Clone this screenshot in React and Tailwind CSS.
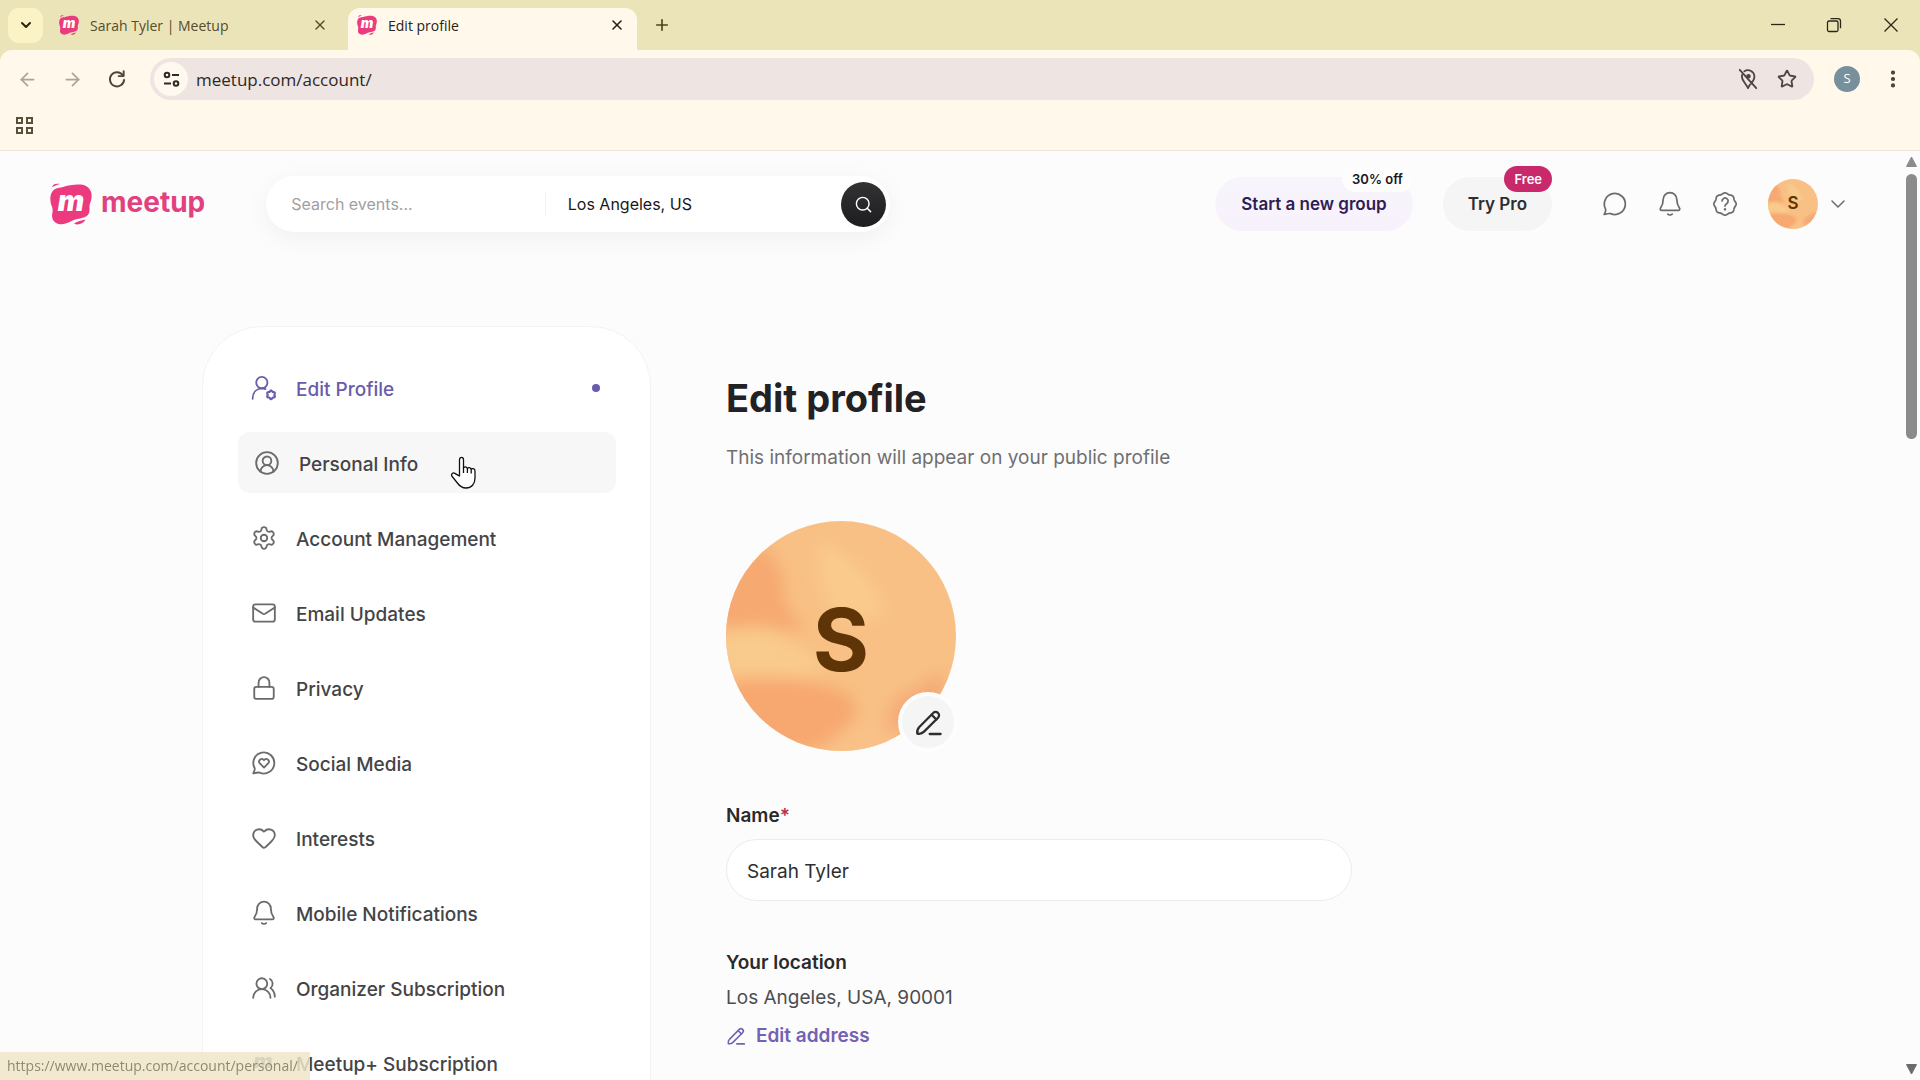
import React from "react";
import {
  Settings,
  Mail,
  Lock,
  Heart,
  UsersRound,
  CircleUserRound,
  Search,
  ChevronDown,
  Star,
  ArrowLeft,
  ArrowRight,
  X,
  Plus,
  EllipsisVertical,
} from "lucide-react";

function Svg({ size = 26, sw = 1.7, children, className = "" }) {
  return (
    <svg
      width={size}
      height={size}
      viewBox="0 0 24 24"
      fill="none"
      stroke="currentColor"
      strokeWidth={sw}
      strokeLinecap="round"
      strokeLinejoin="round"
      className={"shrink-0 " + className}
      aria-hidden="true"
    >
      {children}
    </svg>
  );
}

const scallop = (cx, cy, radius, depth, lobes) =>
  Array.from({ length: 97 }, (_, i) => {
    const t = (i / 96) * Math.PI * 2;
    const r = radius + depth * Math.cos(lobes * t);
    return (i ? "L" : "M") + (cx + r * Math.sin(t)).toFixed(2) + " " + (cy - r * Math.cos(t)).toFixed(2);
  }).join("") + "Z";

const Bell = (p) => (
  <Svg {...p}>
    <path d="M12 1.500a6.300 6.300 0 0 0-6.300 6.300c0 3.200-.7 5.400-2.300 7.600-.9 1.300-.3 2.500 1.100 2.500h15c1.400 0 2-1.200 1.100-2.500-1.600-2.200-2.300-4.400-2.300-7.600A6.300 6.300 0 0 0 12 1.500z" />
    <path d="M10 21.300c1 .9 3 .9 4 0" />
  </Svg>
);

const Chat = ({ children, ...p }) => (
  <Svg {...p}>
    <path d="M3.300 16.600A9.700 9.700 0 1 1 8 20.900c-1.700-.5-3.700.2-6 .7.900-1.800 2-3.400 1.300-5z" />
    {children}
  </Svg>
);

const ChatHeart = (p) => (
  <Chat {...p}>
    <path d="M12 16.200l-3.800-3.800a2.400 2.400 0 0 1 3.500-3.300l.3.300.3-.3a2.400 2.400 0 0 1 3.500 3.300z" />
  </Chat>
);

const UserGear = (p) => (
  <Svg {...p}>
    <circle cx="10" cy="7" r="5.200" />
    <path d="M1.500 22c0-5.600 3.400-9.300 8.500-9.600 1.200 0 2.300.2 3.300.6" />
    <path d={scallop(18.500, 18.300, 3.500, 0.450, 6)} strokeWidth="2" />
  </Svg>
);

const Pencil = (p) => (
  <Svg {...p}>
    <path d="M2.800 21.200c-.5-2 .2-4 1.600-5.500L15.900 4.100a2.800 2.800 0 0 1 4 4L8.300 19.600c-1.500 1.500-3.500 2-5.500 1.600z" />
    <path d="M14.700 5.700l3.800 3.800M13 21.500h9" />
  </Svg>
);

const Help = (p) => (
  <Svg {...p}>
    <path d={scallop(12, 12, 9.800, 0.500, 8)} />
    <path d="M9.300 9.200a2.800 2.800 0 1 1 4.200 2.500c-.9.600-1.500 1-1.500 2.100" />
    <path d="M12 16.900v.1" strokeWidth="2.200" />
  </Svg>
);

function MeetupMark({ className }) {
  return (
    <svg viewBox="0 0 42 42" className={className} aria-hidden="true">
      <path
        d="M13 4C19 2 31 0 36 3c5 3 6 7 5.500 12-.4 4-2.500 6-2 10 .4 5-1 8-6 9.500-5 1.500-8 1.500-12 3.500-5 3-11 4.500-15.500 2C2 37.500 1.500 34 2.500 29c.6-3.500-.5-5-1.500-8C-.6 15 .5 8.500 5 6c3-1.600 5-1 8-2z"
        fill="#ec3a7e"
      />
      <path d="M2 4c1-3 4-4 8-3-2.500.5-5 2-8 3zM24 40.500c4-2.500 7-3 11.500-4C34 40 28 43 24 40.500z" fill="#ec3a7e" />
      <text
        x="21"
        y="28"
        textAnchor="middle"
        fill="#fff"
        className="font-['Inter'] text-[28px] font-black italic"
      >
        m
      </text>
    </svg>
  );
}

function AvatarArt() {
  return (
    <svg viewBox="0 0 230 230" className="absolute inset-0 size-full" preserveAspectRatio="none" aria-hidden="true">
      <defs>
        <filter id="soft" x="-30%" y="-30%" width="160%" height="160%">
          <feGaussianBlur stdDeviation="8" />
        </filter>
      </defs>
      <rect width="230" height="230" fill="#f8c084" />
      <g filter="url(#soft)">
        <path d="M-10 40L40 25 55 50 60 85 80 112 30 104-10 110z" fill="#f6a971" />
        <path d="M95 20c40 20 60 50 64 75l-40 5C90 75 92 45 95 20z" fill="#faca8d" />
        <path d="M-10 112c50-10 70 0 110 35l-20 8c-40 2-60-4-90-8z" fill="#f9cb8c" />
        <path d="M-10 165c50-12 90-8 125 5 25 14 20 34-30 60H10z" fill="#f7a76f" />
        <path d="M168 180l50-30v60h-60z" fill="#f5a977" />
        <path d="M110 215l50-20v40h-60z" fill="#f9c188" />
      </g>
    </svg>
  );
}

const NAV = [
  { label: "Edit Profile", Icon: UserGear, active: true },
  { label: "Personal Info", Icon: CircleUserRound, hover: true },
  { label: "Account Management", Icon: Settings },
  { label: "Email Updates", Icon: Mail },
  { label: "Privacy", Icon: Lock },
  { label: "Social Media", Icon: ChatHeart },
  { label: "Interests", Icon: Heart },
  { label: "Mobile Notifications", Icon: Bell },
  { label: "Organizer Subscription", Icon: UsersRound },
];

function HandCursor() {
  return (
    <svg width="27" height="34" viewBox="0 0 27 34" className="pointer-events-none absolute top-6 left-[212px]" aria-hidden="true">
      <path
        d="M9.500 20V4c0-3.500 4-3.500 4 0v8c.5-1.800 3.700-1.500 3.900.7.600-1.700 3.600-1.400 3.800.8.700-1.400 3.800-1.200 3.800 1.500V22c0 6-3.500 10-9 10-4 0-6.500-2-9-5.500L1.800 20c-1-2 1.200-3.900 3.200-2.600 1.700 1 3 2 4.500 2.600z"
        fill="#fff"
        stroke="#111"
        strokeWidth="1.300"
        strokeLinejoin="round"
      />
      <path d="M13.500 11v6M17.400 12.500V17M21.200 13.500V17.500" stroke="#111" strokeWidth="1.300" />
    </svg>
  );
}

function NavItem({ label, Icon, active, hover }) {
  const tone = active ? "text-[#6a5bab]" : "text-[#444446]";
  return (
    <li>
      <a
        href="#"
        className={
          "relative flex h-[61px] items-center rounded-xl text-[19px] " +
          (hover ? "bg-[#f7f7f7] pl-4 " : "pl-[13px] ") +
          tone
        }
      >
        <span className={active ? "text-[#6a5bab]" : "text-[#6b6b6d]"}>
          <Icon size={26} strokeWidth={1.700} />
        </span>
        <span className="ml-[19px] pt-1 leading-7 font-medium">{label}</span>
        {active && <span className="mr-4 ml-auto size-2 rounded-full bg-[#6a5bab]" />}
        {hover && <HandCursor />}
      </a>
    </li>
  );
}

function BrowserChrome() {
  return (
    <div className="shrink-0 bg-[#ece4b9] font-['Open_Sans',sans-serif]">
      <div className="flex h-[50px] items-center pl-2">
        <button aria-label="Search tabs" className="flex size-[35px] items-center justify-center rounded-[11px] bg-[#fbf3c5] text-[#2a2410]">
          <ChevronDown size={16} strokeWidth={3} />
        </button>
        <div className="ml-4 flex h-[42px] w-[289px] items-center text-[14px] text-[#544c2c]">
          <MeetupMark className="size-5" />
          <span className="ml-[11px] flex-1">Sarah Tyler | Meetup</span>
          <button aria-label="Close tab" className="mr-5">
            <X size={16} strokeWidth={2} />
          </button>
        </div>
        <div className="flex h-[42px] w-[289px] items-center self-end rounded-t-xl bg-[#fff8eb] pb-2 pl-[9px] text-[14px] text-[#26221a]">
          <MeetupMark className="size-5" />
          <span className="ml-[11px] flex-1">Edit profile</span>
          <button aria-label="Close tab" className="mr-3">
            <X size={16} strokeWidth={2.400} />
          </button>
        </div>
        <button aria-label="New tab" className="ml-4 text-[#4a431f]">
          <Plus size={18} strokeWidth={2.200} />
        </button>
        <div className="mr-5 ml-auto flex items-center gap-10 text-[#2a2717]">
          <button aria-label="Minimize">
            <svg width="16" height="16" viewBox="0 0 16 16" stroke="currentColor" strokeWidth="1.300"><path d="M1 7.500h14" /></svg>
          </button>
          <button aria-label="Restore">
            <svg width="16" height="16" viewBox="0 0 16 16" fill="none" stroke="currentColor" strokeWidth="1.300">
              <rect x="1.500" y="4" width="10.500" height="10.500" rx="1.500" />
              <path d="M4.500 1.700h7.500a2.500 2.500 0 0 1 2.500 2.500v7" />
            </svg>
          </button>
          <button aria-label="Close window">
            <svg width="18" height="16" viewBox="0 0 18 16" stroke="currentColor" strokeWidth="1.300"><path d="M2.500 1.500l13 13M15.500 1.500l-13 13" /></svg>
          </button>
        </div>
      </div>
      <div className="rounded-t-xl border-b border-[#efe4d8] bg-[#fff8eb]">
        <div className="flex h-[58px] items-center pr-4 pl-[17px]">
          <button aria-label="Back" className="text-[#a9a59a]"><ArrowLeft size={21} strokeWidth={2} /></button>
          <button aria-label="Forward" className="ml-6 text-[#a9a59a]"><ArrowRight size={21} strokeWidth={2} /></button>
          <button aria-label="Reload" className="ml-6 text-[#4c483c]">
            <Svg size={20} sw={2.300}>
              <path d="M19 7.500A8.500 8.500 0 1 0 20.500 13" />
              <path d="M20 2.500V8.500H14" />
            </Svg>
          </button>
          <div className="ml-[23px] flex h-[42px] flex-1 items-center rounded-full bg-[#eee5e2] pr-[17px] pl-[4px]">
            <button aria-label="View site information" className="flex size-[34px] items-center justify-center rounded-full bg-[#fff8ee] text-[#2d2b27]">
              <svg width="17" height="17" viewBox="0 0 17 17" fill="none" stroke="currentColor" strokeWidth="2">
                <circle cx="4" cy="4" r="2.300" /><path d="M9 4h7M1 12.500h7" /><circle cx="13" cy="12.500" r="2.300" />
              </svg>
            </button>
            <input
              aria-label="Address and search bar"
              defaultValue="meetup.com/account/"
              className="ml-2 w-0 flex-1 bg-transparent pt-[2px] text-[17px] text-[#2c2827] outline-none"
            />
            <button aria-label="Location blocked" className="mr-[18px] text-[#4b4545]">
              <Svg size={22} sw={2}>
                <path d="M8 3.500c5-3 11 .5 11 6 0 3-2 5.500-4 8M5.500 7.500C4 13 10 17 12 22c.6-1.500 1.300-2.700 2-3.800M3 2l18 20" />
                <circle cx="12.500" cy="9" r="1.500" fill="currentColor" />
              </Svg>
            </button>
            <button aria-label="Bookmark this tab" className="text-[#4b4545]"><Star size={20} strokeWidth={2.200} /></button>
          </div>
          <button aria-label="Profile" className="ml-5 flex size-[26px] items-center justify-center rounded-full bg-[#78909c] text-[13px] text-white">S</button>
          <button aria-label="Menu" className="ml-[22px] text-[#45412f]"><EllipsisVertical size={22} strokeWidth={2.600} /></button>
        </div>
        <div className="flex h-[42px] pt-[8px] pl-[15px] text-[#57513c]">
          <button aria-label="Apps" className="self-start">
            <svg width="19" height="19" viewBox="0 0 19 19" fill="none" stroke="currentColor" strokeWidth="2">
              <path d="M2 2h5v5H2zM12 2h5v5h-5zM2 12h5v5H2zM12 12h5v5h-5z" />
            </svg>
          </button>
        </div>
      </div>
    </div>
  );
}

function SiteHeader() {
  return (
    <header className="flex h-[106px] shrink-0 items-center pr-[52px] pl-[50px]">
      <a href="#" className="flex shrink-0 items-center" aria-label="Meetup home">
        <MeetupMark className="h-[42px] w-[42px]" />
        <span className="ml-[9px] pb-1 text-[28px] leading-none font-bold text-[#e2417f]">meetup</span>
      </a>
      <form className="ml-[61px] flex h-14 max-w-[624px] flex-1 items-center rounded-full bg-white pr-1 pl-[25px] text-[16px] shadow-[0_6px_24px_rgba(0,0,0,0.05)]">
        <input aria-label="Search events" placeholder="Search events..." className="w-0 flex-1 outline-none placeholder:text-[#a0a0a4]" />
        <span className="h-6 w-px bg-[#f1f1f3]" />
        <input aria-label="Location" defaultValue="Los Angeles, US" className="ml-[22px] w-0 flex-1 text-[#18181b] outline-none" />
        <button type="button" aria-label="Search" className="ml-5 flex size-[45px] items-center justify-center rounded-full bg-linear-to-b from-[#333335] to-[#1d1d1f] text-white">
          <Search size={19} strokeWidth={1.800} />
        </button>
      </form>
      <div className="ml-auto flex shrink-0 items-center">
        <button className="relative h-[54px] rounded-full bg-linear-to-b from-[#f7f5fb] to-[#f8f1fc] px-[26px] pt-[2px] text-[17px] font-semibold text-[#2f1d52]">
          Start a new group
          <span className="absolute -top-[11px] right-0 rounded-full bg-[#fdfdfd] px-[10px] py-1 text-[13px] leading-[18px] font-semibold text-[#18181b]">30% off</span>
        </button>
        <button className="relative ml-[30px] h-[54px] rounded-full bg-[#f5f5f5] px-[25px] pt-[2px] text-[17px] font-semibold text-[#2e2e30]">
          Try Pro
          <span className="absolute -top-[11px] right-0 rounded-full bg-[#c7296a] px-[10px] py-1 text-[13px] leading-[18px] font-semibold text-white">Free</span>
        </button>
        <div className="ml-[50px] flex items-center gap-[29px] text-[#6b6b6d]">
          <button aria-label="Messages"><Chat size={26} sw={1.600} /></button>
          <button aria-label="Notifications"><Bell size={26} sw={1.600} /></button>
          <button aria-label="Help"><Help size={26} sw={1.600} /></button>
        </div>
        <button aria-label="Account menu" className="ml-[30px] flex items-center gap-2">
          <span className="relative flex size-[50px] items-center justify-center overflow-hidden rounded-full">
            <AvatarArt />
            <span className="relative text-[17px] font-semibold text-[#5f3508]">S</span>
          </span>
          <ChevronDown size={24} strokeWidth={1.500} className="text-[#6b6b6d]" />
        </button>
      </div>
    </header>
  );
}

function Sidebar() {
  return (
    <nav className="w-[449px] shrink-0 overflow-hidden rounded-t-[60px] border border-[#f3f3f3] bg-white pt-[30px] pr-[34px] pl-[35px]">
      <ul className="flex flex-col gap-[14px]">
        {NAV.map((n) => (
          <NavItem key={n.label} {...n} />
        ))}
        <li>
          <a href="#" className="flex h-[61px] items-center pl-[13px] text-[19px] text-[#444446]">
            <svg width="26" height="26" viewBox="0 0 26 26" className="shrink-0" aria-hidden="true">
              <text x="12" y="18" textAnchor="middle" fill="#6b6b6d" className="text-[20px] font-black italic">m</text>
            </svg>
            <span className="ml-[19px] pt-1 leading-7 font-medium">Meetup+ Subscription</span>
          </a>
        </li>
      </ul>
    </nav>
  );
}

function ProfileForm() {
  return (
    <main className="max-w-[626px] flex-1 pt-[47px]">
      <h1 className="text-[38px] leading-[50px] font-bold text-[#222224]">Edit profile</h1>
      <p className="mt-5 text-[19px] leading-[30px] text-[#6f6f71]">This information will appear on your public profile</p>
      <div className="relative mt-[48px] size-[230px]">
        <div className="relative flex size-full items-center justify-center overflow-hidden rounded-full">
          <AvatarArt />
          <span className="relative pt-2 text-[86px] leading-none font-bold text-[#5f3508]">S</span>
        </div>
        <button aria-label="Edit photo" className="absolute -right-[2px] -bottom-[1px] flex size-[60px] items-center justify-center rounded-full border-4 border-[#fdfdfd] bg-[#f5f5f5] text-[#2e2e30]">
          <Pencil size={29} sw={1.900} />
        </button>
      </div>
      <label htmlFor="name" className="mt-[52px] block text-[19px] leading-[26px] font-semibold text-[#2a2a2c]">
        Name<span className="text-[#b8324f]">*</span>
      </label>
      <input id="name" defaultValue="Sarah Tyler" className="mt-[10px] h-[62px] w-full rounded-full border border-[#ececec] bg-white px-[20px] pt-[2px] text-[19px] text-[#2e2e30] outline-none" />
      <h2 className="mt-[49px] text-[19px] leading-[26px] font-semibold text-[#2a2a2c]">Your location</h2>
      <p className="mt-[9px] text-[19px] leading-[26px] text-[#4d4d4f]">Los Angeles, USA, 90001</p>
      <button className="mt-[12px] flex items-center text-[19px] leading-[26px] font-semibold text-[#7361b5]">
        <Pencil size={20} sw={1.900} />
        <span className="ml-[10px]">Edit address</span>
      </button>
    </main>
  );
}

export default function App() {
  return (
    <div className="flex h-screen flex-col overflow-hidden bg-[#fcfcfc] font-['Inter',sans-serif]">
      <BrowserChrome />
      <div className="flex min-h-0 flex-1">
        <div className="flex min-w-0 flex-1 flex-col overflow-hidden">
          <SiteHeader />
          <div className="mt-[69px] flex min-h-0 flex-1 items-start gap-[75px] px-[202px]">
            <Sidebar />
            <ProfileForm />
          </div>
        </div>
        <div className="flex w-[18px] shrink-0 flex-col items-center pt-1 pb-1" aria-hidden="true">
          <svg width="13" height="14" viewBox="0 0 13 14"><path d="M6.500 2l5 9.500h-10z" fill="#8b8b8b" stroke="#8b8b8b" strokeLinejoin="round" /></svg>
          <div className="mt-[5px] h-[265px] w-[11px] rounded-full bg-[#8b8b8b]" />
          <svg width="13" height="14" viewBox="0 0 13 14" className="mt-auto"><path d="M6.500 12l5-9.500h-10z" fill="#6b6b6b" stroke="#6b6b6b" strokeLinejoin="round" /></svg>
        </div>
      </div>
      <div className="fixed bottom-0 left-0 bg-[#eee6c9]/85 py-1 pr-3 pl-[7px] font-['Open_Sans',sans-serif] text-[14px] leading-5 text-[#8f8a72]">
        https://www.meetup.com/account/personal/
      </div>
    </div>
  );
}
